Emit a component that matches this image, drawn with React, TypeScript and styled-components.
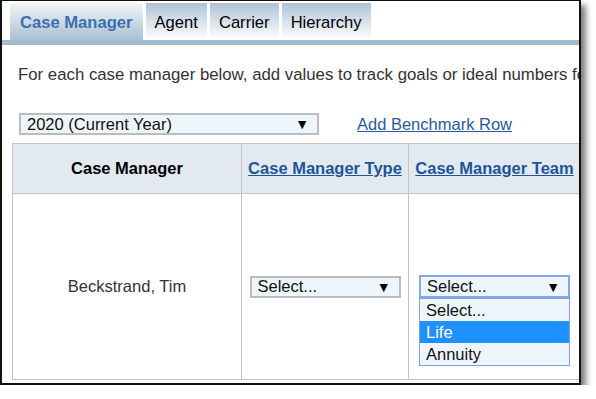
import React from 'react';
import styled, { createGlobalStyle } from 'styled-components';

const GlobalStyle = createGlobalStyle`
    body {
        margin: 0;
        background: #ffffff;
        font-family: "Liberation Sans", Arial, sans-serif;
    }
`;

const Frame = styled.div`
    width: 577px;
    height: 382px;
    border: 2px solid #111;
    border-top-width: 1px;
    box-shadow: 5px 5px 6px rgba(0, 0, 0, 0.5);
    overflow: hidden;
    display: flex;
    flex-direction: column;
    background: #fff;
`;

const TabBar = styled.div`
    display: flex;
    align-items: flex-end;
    gap: 3px;
    height: 37px;
    padding: 2px 0 0 8px;
    border-bottom: 5px solid #a3bacd;
`;

const Tab = styled.div<{ active?: boolean }>`
    height: 37px;
    padding: 0 ${p => (p.active ? 10 : 9)}px;
    display: flex;
    align-items: center;
    padding-top: 2px;
    box-sizing: border-box;
    font-size: 16.6px;
    font-weight: ${p => (p.active ? 'bold' : 'normal')};
    color: ${p => (p.active ? '#3b6fb1' : '#000')};
    background: ${p =>
        p.active
            ? 'linear-gradient(to bottom, #f2f5f8 0%, #a9bfd3 100%)'
            : 'linear-gradient(to bottom, #aec3d6 0%, #ffffff 100%)'};
`;

const Intro = styled.p`
    margin: 21px 0 0 16px;
    font-size: 16.8px;
    line-height: 18px;
    color: #333;
    white-space: nowrap;
`;

const Toolbar = styled.div`
    display: flex;
    align-items: center;
    gap: 38px;
    margin: 29px 0 0 17px;
`;

const FakeSelect = styled.div<{ width: number; focused?: boolean }>`
    position: relative;
    box-sizing: border-box;
    width: ${p => p.width}px;
    height: ${p => (p.focused ? 23 : 22)}px;
    border: 2px solid ${p => (p.focused ? '#84a9e6' : '#bcbcbc')};
    background: #eef6fd;
    display: flex;
    align-items: center;
    justify-content: space-between;
    padding: 0 8px 0 6px;
    font-size: 16.5px;
    color: #111;
`;

const Arrow = styled.span`
    font-size: 14px;
    color: #000;
`;

const Link = styled.a`
    font-size: 16.5px;
    color: #2a5a9a;
    text-decoration: underline;
    cursor: pointer;
`;

const Table = styled.div`
    display: grid;
    grid-template-columns: 229px 167px 172px;
    grid-template-rows: 50px 186px;
    margin: 8px 0 0 10px;
    border-left: 1px solid #c4c4c4;
    border-top: 1px solid #c4c4c4;
`;

const HeadCell = styled.div`
    background: #e3e9f1;
    border-right: 1px solid #c4c4c4;
    border-bottom: 1px solid #c4c4c4;
    display: flex;
    align-items: center;
    justify-content: center;
    font-size: 16.5px;
    font-weight: bold;
    color: #000;
`;

const HeadLink = styled.span`
    color: #1d5595;
    text-decoration: underline;
    cursor: pointer;
`;

const Cell = styled.div`
    border-right: 1px solid #c4c4c4;
    border-bottom: 1px solid #c4c4c4;
    display: flex;
    align-items: center;
    justify-content: center;
    font-size: 16.5px;
    color: #333;
`;

const Options = styled.ul`
    position: absolute;
    top: 21px;
    left: -2px;
    width: 151px;
    box-sizing: border-box;
    margin: 0;
    padding: 0;
    list-style: none;
    border: 1px solid #7f9fdf;
    background: #eef6fd;
    z-index: 2;
`;

const Option = styled.li<{ selected?: boolean }>`
    height: 22px;
    line-height: 22px;
    padding: 0 6px;
    font-size: 16.5px;
    background: ${p => (p.selected ? '#1e90ff' : 'transparent')};
    color: ${p => (p.selected ? '#fff' : '#111')};
`;

const teamOptions = ['Select...', 'Life', 'Annuity'];

const App = () => {
    return (
        <>
            <GlobalStyle />
            <Frame>
                <TabBar>
                    <Tab active>Case Manager</Tab>
                    <Tab>Agent</Tab>
                    <Tab>Carrier</Tab>
                    <Tab>Hierarchy</Tab>
                </TabBar>
                <Intro>For each case manager below, add values to track goals or ideal numbers for each of them.</Intro>
                <Toolbar>
                    <FakeSelect width={300}>
                        <span>2020 (Current Year)</span>
                        <Arrow>▼</Arrow>
                    </FakeSelect>
                    <Link>Add Benchmark Row</Link>
                </Toolbar>
                <Table>
                    <HeadCell>Case Manager</HeadCell>
                    <HeadCell><HeadLink>Case Manager Type</HeadLink></HeadCell>
                    <HeadCell><HeadLink>Case Manager Team</HeadLink></HeadCell>
                    <Cell>Beckstrand, Tim</Cell>
                    <Cell>
                        <FakeSelect width={151}>
                            <span>Select...</span>
                            <Arrow>▼</Arrow>
                        </FakeSelect>
                    </Cell>
                    <Cell>
                        <FakeSelect width={151} focused>
                            <span>Select...</span>
                            <Arrow>▼</Arrow>
                            <Options>
                                {teamOptions.map(o => (
                                    <Option key={o} selected={o === 'Life'}>{o}</Option>
                                ))}
                            </Options>
                        </FakeSelect>
                    </Cell>
                </Table>
            </Frame>
        </>
    );
};

export default App;
